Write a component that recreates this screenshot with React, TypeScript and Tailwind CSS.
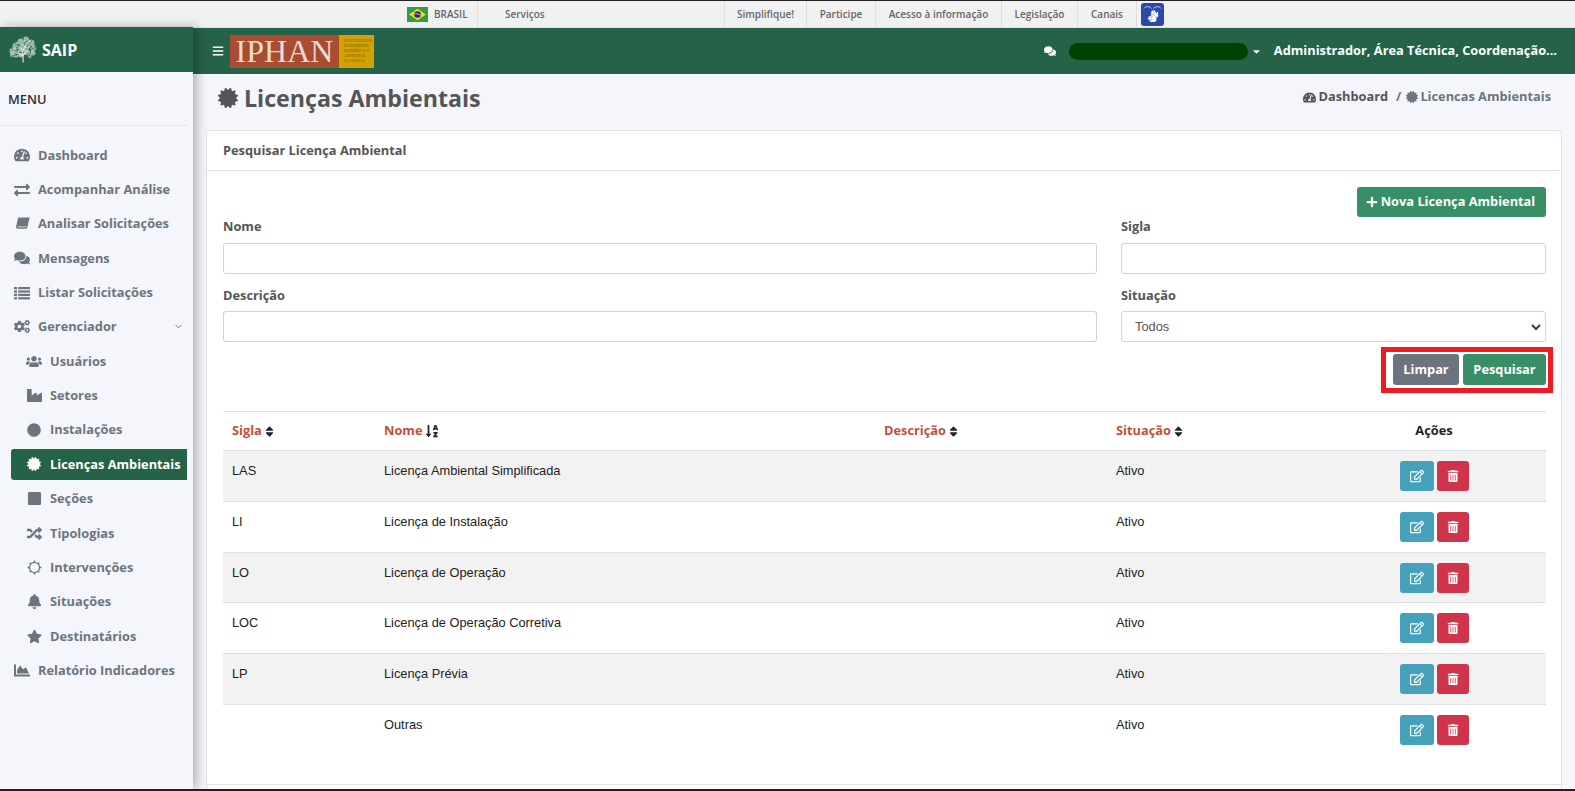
import React from "react";
import {
  FaTachometerAlt, FaExchangeAlt, FaComments, FaCogs, FaUsers, FaIndustry, FaCircle,
  FaCertificate, FaSquare, FaRandom, FaBell, FaStar, FaChartArea, FaPlus, FaRegEdit, FaTrashAlt,
  FaSort, FaSortAlphaDown, FaBars, FaCaretDown, FaSignLanguage,
} from "react-icons/fa";
import { FiChevronDown } from "react-icons/fi";

const open = "font-['Open_Sans',sans-serif]";
const arial = "font-['Liberation_Sans',Arial,sans-serif]";

const top = [
  ["Simplifique!", "w-[82px]"],
  ["Participe", "w-[69px]"],
  ["Acesso à informação", "w-[126px]"],
  ["Legislação", "w-[76px]"],
  ["Canais", "w-[59px]"],
];

function BookIcon({ className }: { className?: string }) {
  return (
    <svg viewBox="0 0 16 14" width="1em" height="1em" className={className} fill="currentColor">
      <path d="M4.2.5h10.6c.5 0 .8.4.7.9l-2.6 10c-.2.6-.7 1.1-1.3 1.1H2.8c-1.2 0-1.9-1-1.7-2l2-8.9C3.3.9 3.7.5 4.2.5z" />
      <path d="M2.9 10.6h9.2" stroke="#f4f6fb" strokeWidth=".8" fill="none" />
    </svg>
  );
}

function ListIcon({ className }: { className?: string }) {
  return (
    <svg viewBox="0 0 16 14" width="1em" height="1em" className={className} fill="currentColor">
      <rect x="0" y="1" width="3" height="2.2" />
      <rect x="4.2" y="1" width="11.8" height="2.2" />
      <rect x="0" y="4.4" width="3" height="2.2" />
      <rect x="4.2" y="4.4" width="11.8" height="2.2" />
      <rect x="0" y="7.8" width="3" height="2.2" />
      <rect x="4.2" y="7.8" width="11.8" height="2.2" />
      <rect x="0" y="11.2" width="3" height="2.2" />
      <rect x="4.2" y="11.2" width="11.8" height="2.2" />
    </svg>
  );
}

function SunIcon({ className }: { className?: string }) {
  return (
    <svg viewBox="0 0 16 16" width="1em" height="1em" className={className} fill="none" stroke="currentColor">
      <circle cx="8" cy="8" r="5.4" strokeWidth="1.3" />
      <path d="M8 .6v2M8 13.4v2M.6 8h2M13.4 8h2M2.8 2.8l1.3 1.3M11.9 11.9l1.3 1.3M2.8 13.2l1.3-1.3M11.9 4.1l1.3-1.3" strokeWidth="1.4" />
    </svg>
  );
}

function Flag() {
  return (
    <svg viewBox="0 0 21 15" className="w-[21px] h-[15px]">
      <rect width="21" height="15" fill="#2f9e46" />
      <path d="M10.5 1.8 19 7.5 10.5 13.2 2 7.5Z" fill="#f4d81c" />
      <circle cx="10.5" cy="7.5" r="3.3" fill="#1f2a80" />
      <path d="M7.4 6.8c2-.4 4.4.1 6.1 1.4" stroke="#fff" strokeWidth=".7" fill="none" />
    </svg>
  );
}

function Tree() {
  const blobs = [
    [4, 15, 3.5], [7, 10, 3.5], [12, 6, 3.5], [17, 3.5, 3], [22, 7, 3.5], [24, 12, 3], [7, 18, 3.5], [13, 12, 4], [18, 9, 3.5], [3, 19, 2], [24, 17, 2.5], [12, 19, 2.5], [18, 16, 3.2], [21, 20, 2],
  ];
  return (
    <svg viewBox="0 0 28 27" className="w-[28px] h-[27px] shrink-0">
      {blobs.map(([x, y, r], i) => (
        <circle key={i} cx={x} cy={y} r={r} fill="#b9cdc3" opacity=".8" />
      ))}
      <g stroke="#2f6d53" strokeWidth=".8" fill="none">
        <path d="M2 12 8 16M7 5l5 7M14 2l2 8M23 4l-5 7M27 11l-7 4M3 20l7-2M23 21l-6-4M11 8l-4 4M20 14l3-4M6 8l3 1M16 6l3-1M8 14l2-3M21 9l2 2M5 17l3 2" />
      </g>
      <g fill="#eef4f0">
        <circle cx="8" cy="7" r=".8" /><circle cx="15" cy="5" r=".8" /><circle cx="21" cy="5" r=".8" /><circle cx="5" cy="13" r=".8" /><circle cx="23" cy="15" r=".8" /><circle cx="10" cy="15" r=".8" /><circle cx="19" cy="12" r=".8" />
      </g>
      <path d="M14 26.5c.4-4 .3-8-.5-12M14 20l-5-3M14.3 19l4-4M13.8 15l-3-4M14 14l3-5" stroke="#e6eee9" strokeWidth="1.1" fill="none" />
    </svg>
  );
}

function Logo() {
  return (
    <div className="ml-[6px] flex h-[33px] w-[144px] shrink-0">
      <div className="w-[109px] bg-[#a94c31] flex items-center justify-center">
        <span className="font-['Liberation_Serif',serif] text-[32px] leading-[33px] text-[#eaddd3]">IPHAN</span>
      </div>
      <div className="w-[35px] bg-[#d3a100] flex flex-col justify-center pl-[5px] font-['Liberation_Serif',serif] text-[3.6px] leading-[5px] tracking-[0.3px] text-[#6f5210] uppercase">
        <span>Instituto do</span>
        <span>Patrimônio</span>
        <span>Histórico e</span>
        <span>Artístico</span>
        <span>Nacional</span>
      </div>
    </div>
  );
}

type Item = { label: string; Icon: React.ComponentType<{ className?: string }>; sub?: boolean; active?: boolean; chevron?: boolean; size: string };

const items: Item[] = [
  { label: "Dashboard", Icon: FaTachometerAlt, size: "text-[16px]" },
  { label: "Acompanhar Análise", Icon: FaExchangeAlt, size: "text-[16px]" },
  { label: "Analisar Solicitações", Icon: BookIcon, size: "text-[15px]" },
  { label: "Mensagens", Icon: FaComments, size: "text-[16px]" },
  { label: "Listar Solicitações", Icon: ListIcon, size: "text-[16px]" },
  { label: "Gerenciador", Icon: FaCogs, chevron: true, size: "text-[17px]" },
  { label: "Usuários", Icon: FaUsers, sub: true, size: "text-[17px]" },
  { label: "Setores", Icon: FaIndustry, sub: true, size: "text-[15px]" },
  { label: "Instalações", Icon: FaCircle, sub: true, size: "text-[14px]" },
  { label: "Licenças Ambientais", Icon: FaCertificate, sub: true, active: true, size: "text-[14px]" },
  { label: "Seções", Icon: FaSquare, sub: true, size: "text-[15px]" },
  { label: "Tipologias", Icon: FaRandom, sub: true, size: "text-[15px]" },
  { label: "Intervenções", Icon: SunIcon, sub: true, size: "text-[15px]" },
  { label: "Situações", Icon: FaBell, sub: true, size: "text-[15px]" },
  { label: "Destinatários", Icon: FaStar, sub: true, size: "text-[15px]" },
  { label: "Relatório Indicadores", Icon: FaChartArea, size: "text-[17px]" },
];

function Sidebar() {
  return (
    <aside className={`w-[193px] shrink-0 -mt-px relative z-10 bg-[#f4f6fb] shadow-[4px_0_10px_rgba(0,0,0,0.28)] ${open}`}>
      <div className="h-[45px] bg-[#256349] flex items-center pl-[9px] gap-[5px]">
        <Tree />
        <span className="text-white font-bold text-[16px]">SAIP</span>
      </div>
      <div className="pr-[6px]">
        <div className="h-[54px] border-b border-[#e3e5ea] pl-[8px] pt-[17px] text-[12.8px] leading-[20px] font-semibold text-[#2f2f35]">MENU</div>
      </div>
      <nav className="pt-[12px] flex flex-col">
        {items.map(({ label, Icon, sub, active, chevron, size }) => (
          <div key={label} className={`h-[34.37px] shrink-0 flex items-center ${active ? "pr-[6px] pl-[11px]" : "pl-[14px]"}`}>
            <div
              className={`flex items-center h-[31px] grow text-[12.8px] font-bold whitespace-nowrap rounded-l-[3px] ${
                active ? "bg-[#256349] text-white pl-[15px]" : sub ? "text-[#6c757d] pl-[12px]" : "text-[#6c757d]"
              }`}
            >
              <span className="flex justify-center shrink-0 w-[16px] mr-[8px]">
                <Icon className={size} />
              </span>
              {label}
              {chevron && <FiChevronDown className="ml-auto mr-[9px] text-[11px]" />}
            </div>
          </div>
        ))}
      </nav>
    </aside>
  );
}

const rows = [
  ["LAS", "Licença Ambiental Simplificada"],
  ["LI", "Licença de Instalação"],
  ["LO", "Licença de Operação"],
  ["LOC", "Licença de Operação Corretiva"],
  ["LP", "Licença Prévia"],
  ["", "Outras"],
];

const field = "block w-full h-[31px] bg-white border border-[#ced4da] rounded-[3px]";
const label = "block text-[12.8px] font-bold text-[#555] leading-[20px]";

function SortHead({ children, alpha, pad }: { children: string; alpha?: boolean; pad: string }) {
  return (
    <th className={`text-left align-middle font-bold text-[12.8px] text-[#c0513c] ${pad}`}>
      <span className={`inline-flex items-center ${alpha ? "gap-[3px]" : "gap-[1px]"}`}>
        {children}
        {alpha ? <FaSortAlphaDown className="text-[#222] text-[14px]" /> : <FaSort className="text-[#222] text-[13px]" />}
      </span>
    </th>
  );
}

export default function App() {
  return (
    <div className="h-[791px] overflow-hidden flex flex-col bg-[#f4f6fb] border-t border-b-2 border-t-[#222] border-b-[#222]">
      <header className={`h-[27px] shrink-0 bg-[#f1f1f1] border-b border-[#e2e2e2] flex items-stretch pl-[407px] text-[#666] text-[10px] font-semibold ${open}`}>
        <div className="flex items-center w-[71px] border-r border-[#dedede]">
          <Flag />
          <span className="ml-[6px]">BRASIL</span>
        </div>
        <div className="flex items-center w-[247px] pl-[27px] border-r border-[#dedede]">Serviços</div>
        {top.map(([t, w]) => (
          <div key={t} className={`flex items-center justify-center border-r border-[#dedede] ${w}`}>{t}</div>
        ))}
        <div className="flex items-center pl-[4px]">
          <div className="w-[23px] h-[23px] rounded-[3px] bg-[#2a4aa5] flex flex-col items-center text-white pt-[2px]">
            <svg viewBox="0 0 20 4" className="w-[19px] h-[4px]">
              <path d="M1 3.5C3 1 6 1 9 3.5M11 3.5c3-2.5 6-2.500 8 0" stroke="#dfe6f7" strokeWidth=".9" fill="none" />
            </svg>
            <FaSignLanguage className="text-[12px] mt-[1px]" />
          </div>
        </div>
      </header>

      <div className="flex grow min-h-0">
        <Sidebar />
        <div className={`grow min-w-0 flex flex-col ${open}`}>
          <div className="h-[46px] shrink-0 bg-[#256349] flex items-center text-white pl-[19px] pr-[18px]">
            <FaBars className="text-[12px]" />
            <Logo />
            <div className="ml-auto flex items-center">
              <FaComments className="text-[12px]" />
              <span className="ml-[13px] w-[179px] h-[17px] rounded-full bg-[#004000]" />
              <FaCaretDown className="ml-[3px] text-[11px]" />
              <span className="ml-[12px] text-[12.8px] font-bold whitespace-nowrap">Administrador, Área Técnica, Coordenação...</span>
            </div>
          </div>

          <div className="h-[56px] shrink-0 flex justify-between pl-[25px] pr-[24px]">
            <h1 className="flex items-center gap-[6px] h-[48px] text-[23.2px] font-bold text-[#555]">
              <FaCertificate className="text-[20px]" />
              Licenças Ambientais
            </h1>
            <div className="flex items-center h-[46px] text-[12.8px] font-bold whitespace-nowrap">
              <FaTachometerAlt className="text-[#555] text-[13px] mr-[2px]" />
              <span className="text-[#555]">Dashboard</span>
              <span className="ml-[8px] mr-[5px] text-[#6c757d]">/</span>
              <FaCertificate className="text-[#6c757d] text-[12px] mr-[2px]" />
              <span className="text-[#6c757d]">Licencas Ambientais</span>
            </div>
          </div>

          <section className="ml-[13px] mr-[13px] grow bg-white border border-[#dfe1e5] border-b-0 rounded-t-[3px] flex flex-col min-h-0">
            <div className="h-[40px] shrink-0 border-b border-[#dfe1e5] pl-[16px] flex items-center text-[12.8px] font-bold text-[#555]">
              Pesquisar Licença Ambiental
            </div>
            <div className="grow min-h-0 pl-[16px] pr-[15px] pt-[16px]">
              <div className="flex justify-end">
                <button className="h-[30px] w-[189px] rounded-[3px] bg-[#388e66] text-white text-[12.8px] font-bold flex items-center justify-center gap-[3px] pr-[2px]">
                  <FaPlus className="text-[12px]" />
                  Nova Licença Ambiental
                </button>
              </div>
              <div className="grid grid-cols-[874px_425px] gap-x-[24px] mt-px">
                <div>
                  <label className={`${label} mt-[-2px]`}>Nome</label>
                  <div className={`${field} mt-[7px]`} />
                </div>
                <div>
                  <label className={`${label} mt-[-2px]`}>Sigla</label>
                  <div className={`${field} mt-[7px]`} />
                </div>
                <div>
                  <label className={`${label} mt-[11px]`}>Descrição</label>
                  <div className={`${field} mt-[6px]`} />
                </div>
                <div>
                  <label className={`${label} mt-[11px]`}>Situação</label>
                  <div className={`${field} mt-[6px] flex items-center justify-between pl-[13px] pr-[3px] ${arial} text-[12.8px] text-[#555]`}>
                    Todos
                    <svg viewBox="0 0 12 12" className="w-[12px] h-[12px]">
                      <path d="M2 4l4 4 4-4" stroke="#3a3a3a" strokeWidth="2" fill="none" />
                    </svg>
                  </div>
                </div>
              </div>
              <div className="flex justify-end h-[69px] pt-[5px]">
                <div className="flex gap-[4px] h-[46px] border-[5px] border-[#ed1c24] pl-[7px] pr-[2px] pt-[2px] pb-[3px] -mr-[7px] box-border">
                  <button className="w-[66px] rounded-[3px] bg-[#6c757d] text-white text-[12.8px] font-bold">Limpar</button>
                  <button className="w-[83px] rounded-[3px] bg-[#388e66] text-white text-[12.8px] font-bold">Pesquisar</button>
                </div>
              </div>

              <table className="w-[1323px] table-fixed border-collapse">
                <colgroup>
                  <col className="w-[151px]" />
                  <col className="w-[500px]" />
                  <col className="w-[232px]" />
                  <col className="w-[214px]" />
                  <col />
                </colgroup>
                <thead>
                  <tr className="h-[39px] border-t border-[#dee2e6]">
                    <SortHead pad="pl-[9px]">Sigla</SortHead>
                    <SortHead alpha pad="pl-[10px]">Nome</SortHead>
                    <SortHead pad="pl-[10px]">Descrição</SortHead>
                    <SortHead pad="pl-[10px]">Situação</SortHead>
                    <th className="text-center font-bold text-[12.8px] text-[#222] align-middle pl-[2px]">Ações</th>
                  </tr>
                </thead>
                <tbody className={`${arial} text-[12.8px] text-[#222]`}>
                  {rows.map(([s, n], i) => (
                    <tr key={n} className={`border-t border-[#dee2e6] ${i % 2 === 0 ? "bg-[#f2f2f2]" : ""}`}>
                      <td className="h-[50.8px] align-top pt-[9px] pl-[9px] leading-[21px]">{s}</td>
                      <td className="align-top pt-[9px] pl-[10px] leading-[21px]">{n}</td>
                      <td />
                      <td className="align-top pt-[9px] pl-[10px] leading-[21px]">Ativo</td>
                      <td className="align-top pt-[10px] pl-[2px]">
                        <div className="flex justify-center gap-[3px]">
                          <button className="w-[34px] h-[30px] rounded-[3px] bg-[#46a2bb] text-white flex items-center justify-center"><FaRegEdit className="text-[14px]" /></button>
                          <button className="w-[32px] h-[30px] rounded-[3px] bg-[#cf344b] text-white flex items-center justify-center"><FaTrashAlt className="text-[12px]" /></button>
                        </div>
                      </td>
                    </tr>
                  ))}
                </tbody>
              </table>
            </div>
            <div className="h-[5px] shrink-0 border-t border-[#dfe1e5]" />
          </section>
        </div>
      </div>
    </div>
  );
}
